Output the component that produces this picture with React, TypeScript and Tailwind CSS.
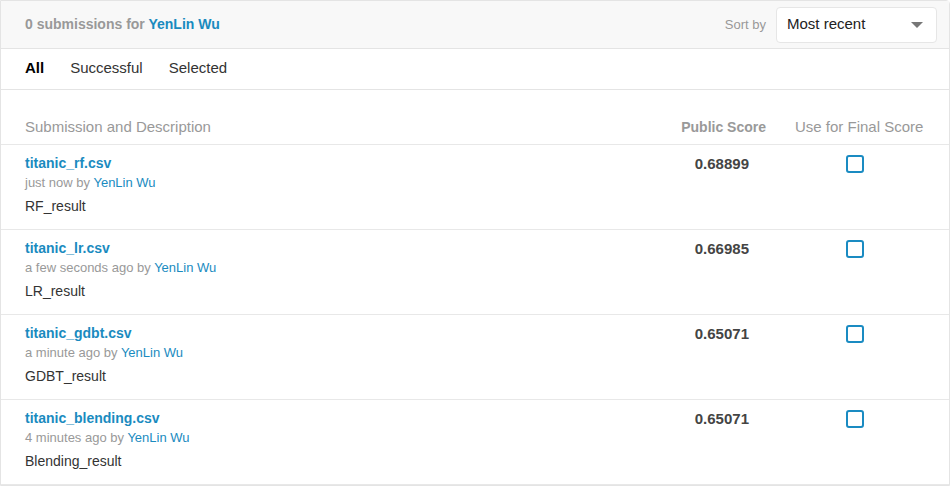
const rows = [
  { file: "titanic_rf.csv", when: "just now", desc: "RF_result", score: "0.68899" },
  { file: "titanic_lr.csv", when: "a few seconds ago", desc: "LR_result", score: "0.66985" },
  { file: "titanic_gdbt.csv", when: "a minute ago", desc: "GDBT_result", score: "0.65071" },
  { file: "titanic_blending.csv", when: "4 minutes ago", desc: "Blending_result", score: "0.65071" },
];

export default function App() {
  return (
    <div className="h-[486px] w-[951px] overflow-hidden bg-white font-['Liberation_Sans',Arial,sans-serif]">
      <div className="w-[950px] rounded-tr-[4px] border border-[#e4e4e4]">
        {/* header */}
        <div className="flex h-[47px] items-center justify-between bg-[#f8f8f8] pl-6 pr-[12px]">
          <div className="text-[14px] font-bold text-[#999]">
            0 submissions for <span className="text-[#1a8bbf]">YenLin Wu</span>
          </div>
          <div className="flex items-center gap-[10px]">
            <span className="text-[13px] text-[#999]">Sort by</span>
            <div className="flex h-[36px] w-[161px] items-center justify-between rounded-[4px] border border-[#e6e6e6] bg-white pl-[10px] pr-[13px]">
              <span className="text-[15px] text-[#222]">Most recent</span>
              <svg width="12" height="6" viewBox="0 0 12 6">
                <path d="M0 0h12L6 6z" fill="#777" />
              </svg>
            </div>
          </div>
        </div>

        {/* tabs */}
        <div className="flex h-[41px] items-center gap-[26px] border-t border-[#e4e4e4] px-6 pb-[1px] text-[15px] text-[#333]">
          <span className="font-bold text-black">All</span>
          <span>Successful</span>
          <span>Selected</span>
        </div>

        {/* table */}
        <div className="border-t border-[#e4e4e4] pt-[28px]">
          <div className="flex h-[27px] items-start border-b border-[#e8e8e8] pl-6 text-[15px] text-[#999]">
            <div className="flex-1 leading-[18px]">Submission and Description</div>
            <div className="w-[160px] text-right text-[14px] font-bold leading-[18px]">Public Score</div>
            <div className="w-[183px] pl-[29px] leading-[18px]">Use for Final Score</div>
          </div>
          {rows.map((r) => (
            <div key={r.file} className="flex h-[85px] border-b border-[#e8e8e8] pl-6 pt-[9px]">
              <div className="flex-1">
                <div className="text-[14px] font-bold leading-[18px] text-[#1a8bbf]">{r.file}</div>
                <div className="text-[13px] leading-[21px] text-[#999]">
                  {r.when} by <span className="text-[#1a8bbf]">YenLin Wu</span>
                </div>
                <div className="pt-[4px] text-[14px] leading-[18px] text-[#333]">{r.desc}</div>
              </div>
              <div className="w-[120px] pt-[1px] text-right text-[15px] font-bold leading-[18px] text-[#444]">
                {r.score}
              </div>
              <div className="w-[200px] pl-[97px] pt-[1px]">
                <div className="h-[18px] w-[18px] rounded-[3px] border-2 border-[#1a8bc2]" />
              </div>
            </div>
          ))}
        </div>
      </div>
    </div>
  );
}
